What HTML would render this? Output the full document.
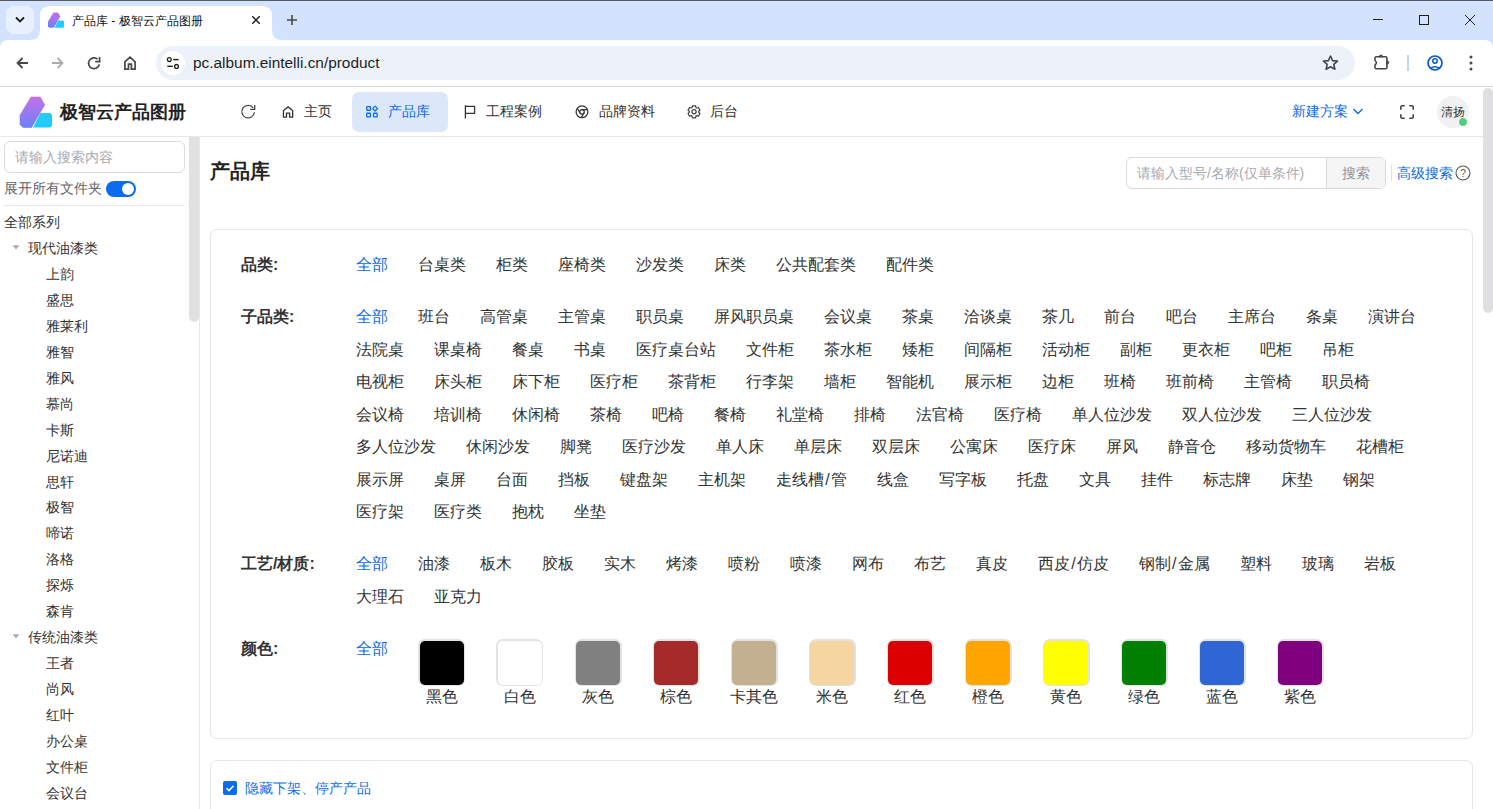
<!DOCTYPE html><html><head><meta charset="utf-8"><style>
*{box-sizing:border-box;margin:0;padding:0}
html,body{width:1493px;height:809px;overflow:hidden;background:#fff;font-family:"Liberation Sans",sans-serif;color:#333}
.a{position:absolute}
.t{position:absolute;white-space:nowrap;line-height:20px;height:20px}
svg{position:absolute;overflow:visible}
#tabstrip{left:0;top:0;width:1493px;height:48px;background:#d3e3fd}
#topline{left:0;top:0;width:1493px;height:1px;background:#575a62}
#toolbar{left:0;top:40px;width:1493px;height:46px;background:#fff;border-radius:8px 8px 0 0}
#tbline{left:0;top:86px;width:1493px;height:1px;background:#d5d7db}
#omni{left:156px;top:46px;width:1199px;height:34px;background:#edf2fa;border-radius:17px}
#header{left:0;top:87px;width:1483px;height:50px;background:#fff;border-bottom:1px solid #e8e8e8}
#sidebar{left:0;top:137px;width:200px;height:672px;border-right:1px solid #e8e8ea;background:#fff}
#pscroll{left:1483px;top:88px;width:10px;height:225px;background:#dfdfe1;border-radius:5px}
#sscroll{left:189px;top:137px;width:10px;height:185px;background:#e1e1e3;border-radius:0 0 5px 5px}
.nav{font-size:14px;color:#333}
.blue{color:#0d6bf0}
.tree{font-size:14px;color:#333}
.row{position:absolute;left:356px;display:flex;gap:30px;font-size:16px;line-height:20px;height:20px;white-space:nowrap;color:#333}
.lab{position:absolute;left:241px;font-size:16px;font-weight:bold;line-height:20px;color:#333;white-space:nowrap}
.card{position:absolute;left:210px;width:1263px;border:1px solid #e6e6e9;border-radius:7px;background:#fff}
.sw{position:absolute;top:639px;width:47px;height:47px;border:2px solid #e2e2e4;border-radius:7px}
.sw i{position:absolute;left:-0.5px;top:-0.5px;right:-0.5px;bottom:-0.5px;border-radius:5px}
.swl{position:absolute;top:687px;width:60px;text-align:center;font-size:16px;line-height:20px;color:#333}
</style></head><body>
<div class="a" id="tabstrip"></div><div class="a" id="topline"></div>
<div class="a" style="left:6px;top:6px;width:28px;height:28px;border-radius:8px;background:#e9f1fe"></div>
<svg style="left:0;top:0" width="40" height="40"><path d="M16 17.5L20 21.5L24 17.5" fill="none" stroke="#1f1f1f" stroke-width="1.8"/></svg>
<svg style="left:0;top:0" width="300" height="48"><path d="M30 40 Q40 40 40 30 V16 Q40 6 50 6 H262 Q272 6 272 16 V30 Q272 40 282 40 Z" fill="#fff"/></svg>
<svg style="left:46px;top:10.5px" width="20" height="19" viewBox="0 0 40 38">
<defs><linearGradient id="fg1" x1="0" y1="0" x2="0" y2="1"><stop offset="0" stop-color="#c66fe8"/><stop offset="0.5" stop-color="#9a79ee"/><stop offset="1" stop-color="#6c7ff5"/></linearGradient></defs>
<path d="M24.5 19H33A3 3 0 0 1 36 22V30.5A3 3 0 0 1 33 33.5H17Z" fill="#21cbfc"/>
<path d="M15 3H24.4L28.7 11L15.5 33.5H7L4 30.5V21Z" fill="url(#fg1)"/></svg>
<div class="t" style="left:72px;top:10.5px;font-size:12px;color:#111">产品库 - 极智云产品图册</div>
<svg style="left:0;top:0" width="300" height="40"><path d="M252.3 16.3L259.7 23.7M259.7 16.3L252.3 23.7" stroke="#1f1f1f" stroke-width="1.5"/><path d="M292 15V25M287 20H297" stroke="#474747" stroke-width="1.6"/></svg>
<svg style="left:1360px;top:0" width="133" height="40"><path d="M13 19.5H23" stroke="#1f1f1f" stroke-width="1"/><rect x="59.5" y="15.5" width="9" height="9" fill="none" stroke="#1f1f1f" stroke-width="1"/><path d="M105 15L115 25M115 15L105 25" stroke="#1f1f1f" stroke-width="1"/></svg>
<div class="a" id="toolbar"></div><div class="a" id="tbline"></div><div class="a" id="omni"></div>
<svg style="left:0;top:40px" width="200" height="46">
<path d="M28 23H17.5M22.5 18L17.5 23L22.5 28" fill="none" stroke="#474747" stroke-width="1.8"/>
<path d="M52 23H62.5M57.5 18L62.5 23L57.5 28" fill="none" stroke="#a9abae" stroke-width="1.8"/>
<path d="M99.3 24.3A5.4 5.4 0 1 1 97.6 19.2" fill="none" stroke="#474747" stroke-width="1.7"/><path d="M95.2 21.6H99.6V17" fill="none" stroke="#474747" stroke-width="1.7"/>
<path d="M124.9 29.1V21.8L130 17.2L135.1 21.8V29.1H131.4V24.1H128.5V29.1Z" fill="none" stroke="#474747" stroke-width="1.7" stroke-linejoin="miter"/>
<circle cx="173" cy="23" r="12" fill="#fff"/>
<circle cx="169.3" cy="19.6" r="1.9" fill="none" stroke="#1f1f1f" stroke-width="1.3"/><path d="M173.2 19.6H178.6" stroke="#1f1f1f" stroke-width="1.4"/>
<circle cx="176.5" cy="26.4" r="1.9" fill="none" stroke="#1f1f1f" stroke-width="1.3"/><path d="M167.3 26.3H172.8" stroke="#1f1f1f" stroke-width="1.4"/>
</svg>
<div class="t" style="left:193px;top:52px;font-size:15.4px;color:#1f1f1f;line-height:22px;height:22px">pc.album.eintelli.cn/product</div>
<svg style="left:1300px;top:40px" width="193" height="46">
<path d="M30.5 16L32.6 20.6L37.5 21.1L33.8 24.4L34.9 29.3L30.5 26.8L26.1 29.3L27.2 24.4L23.5 21.1L28.4 20.6Z" fill="none" stroke="#474747" stroke-width="1.6" stroke-linejoin="round"/>
<path d="M76.3 16.8H85.6Q86.9 16.8 86.9 18.1V27.4Q86.9 28.7 85.6 28.7H76.3Q75 28.7 75 27.4V25Q77.8 22.75 75 20.5V18.1Q75 16.8 76.3 16.8Z" fill="none" stroke="#474747" stroke-width="1.6" stroke-linejoin="round"/>
<path d="M79.2 16.8A1.8 1.8 0 0 1 82.8 16.8Z" fill="#474747" stroke="#474747" stroke-width="0.8"/><path d="M86.9 20.8A1.8 1.8 0 0 1 86.9 24.4Z" fill="#474747" stroke="#474747" stroke-width="0.8"/>
<path d="M108 15V31" stroke="#a8c7fa" stroke-width="1.5"/>
<circle cx="135" cy="23" r="7" fill="none" stroke="#0b57d0" stroke-width="1.7"/><circle cx="135" cy="21" r="2.2" fill="none" stroke="#0b57d0" stroke-width="1.5"/><path d="M130.5 28A6 4 0 0 1 139.5 28" fill="none" stroke="#0b57d0" stroke-width="1.5"/>
<circle cx="171" cy="17" r="1.5" fill="#474747"/><circle cx="171" cy="23" r="1.5" fill="#474747"/><circle cx="171" cy="29" r="1.5" fill="#474747"/>
</svg>
<div class="a" id="header"></div>
<svg style="left:16px;top:94px" width="40" height="38" viewBox="0 0 40 38">
<defs><linearGradient id="lg1" x1="0" y1="0" x2="0" y2="1"><stop offset="0" stop-color="#c66fe8"/><stop offset="0.5" stop-color="#9a79ee"/><stop offset="1" stop-color="#6c7ff5"/></linearGradient></defs>
<path d="M24.5 19H33A3 3 0 0 1 36 22V30.5A3 3 0 0 1 33 33.5H17Z" fill="#21cbfc"/>
<path d="M15 3H24.4L28.7 11L15.5 33.5H7L4 30.5V21Z" fill="url(#lg1)" stroke="url(#lg1)" stroke-width="0.6" stroke-linejoin="round"/>
</svg>
<div class="t" style="left:60px;top:102px;font-size:18px;font-weight:bold;color:#222">极智云产品图册</div>
<svg style="left:240px;top:103px" width="16" height="16"><path d="M14.4 9.2A6.3 6.3 0 1 1 13.2 4.9" fill="none" stroke="#444" stroke-width="1.3"/><path d="M10.2 6.4H14.7V2" fill="none" stroke="#444" stroke-width="1.3"/></svg>
<div class="a" style="left:352px;top:92px;width:96px;height:40px;border-radius:7px;background:#dce8fa"></div>
<svg style="left:281px;top:104px" width="16" height="16"><path d="M2.45 13.05V6.5L7.05 2.9L11.65 6.5V13.05H8.6V9.2H5.5V13.05Z" fill="none" stroke="#333" stroke-width="1.3" stroke-linejoin="miter"/></svg>
<div class="t nav" style="left:304px;top:101px">主页</div>
<svg style="left:365px;top:104px" width="16" height="16"><g fill="none" stroke="#0d6bf0" stroke-width="1.3"><rect x="1.75" y="2.65" width="3.7" height="3.6" rx="0.4"/><rect x="1.75" y="9.25" width="3.7" height="3.7" rx="0.4"/><rect x="8.55" y="9.25" width="3.6" height="3.7" rx="0.4"/><path d="M10.1 2.15L12.55 4.6L10.1 7.05L7.65 4.6Z" stroke-linejoin="round"/></g></svg>
<div class="t nav blue" style="left:388px;top:101px">产品库</div>
<svg style="left:463px;top:104px" width="16" height="16"><path d="M2.4 14.6V1.2M2.4 2.4H11.6V9.3H2.4" fill="none" stroke="#333" stroke-width="1.3" stroke-linejoin="round"/></svg>
<div class="t nav" style="left:486px;top:101px">工程案例</div>
<svg style="left:574px;top:104px" width="16" height="16"><g fill="none" stroke="#333" stroke-width="1.25"><circle cx="8" cy="7.8" r="5.9"/><circle cx="8" cy="7.8" r="2.3"/><path d="M8.00 5.50L13.43 5.50M9.99 8.95L7.28 13.66M6.01 8.95L3.29 4.24"/></g></svg>
<div class="t nav" style="left:599px;top:101px">品牌资料</div>
<svg style="left:686px;top:104px" width="16" height="16"><g fill="none" stroke="#444" stroke-width="1.25" stroke-linejoin="round"><path d="M5.98 3.67L6.50 1.78L9.50 1.78L10.02 3.67L10.57 3.99L12.46 3.49L13.96 6.09L12.59 7.48L12.59 8.12L13.96 9.51L12.46 12.11L10.57 11.61L10.02 11.93L9.50 13.82L6.50 13.82L5.98 11.93L5.43 11.61L3.54 12.11L2.04 9.51L3.41 8.12L3.41 7.48L2.04 6.09L3.54 3.49L5.43 3.99Z"/><circle cx="8" cy="7.8" r="2.1"/></g></svg>
<div class="t nav" style="left:710px;top:101px">后台</div>
<div class="t nav blue" style="left:1292px;top:101px">新建方案</div>
<svg style="left:1352px;top:105px" width="12" height="12"><path d="M1.5 4L6 8.5L10.5 4" fill="none" stroke="#0d6bf0" stroke-width="1.4"/></svg>
<svg style="left:1399px;top:104px" width="16" height="16"><g fill="none" stroke="#444" stroke-width="1.6" stroke-linecap="round"><path d="M1.8 5.2V3.3Q1.8 1.8 3.3 1.8H5.2M10.8 1.8H12.7Q14.2 1.8 14.2 3.3V5.2M14.2 10.8V12.7Q14.2 14.2 12.7 14.2H10.8M5.2 14.2H3.3Q1.8 14.2 1.8 12.7V10.8"/></g></svg>
<div class="a" style="left:1437px;top:96px;width:32px;height:32px;border-radius:16px;background:#f1f1f1"></div>
<div class="t" style="left:1441px;top:102px;font-size:12px;color:#333">清扬</div>
<div class="a" style="left:1458px;top:117px;width:10px;height:10px;border-radius:5px;background:#4fcd7f;border:1px solid #fff"></div>
<div class="a" id="pscroll"></div>
<div class="a" id="sidebar"></div>
<div class="a" style="left:4px;top:141px;width:181px;height:32px;border:1px solid #dcdcdc;border-radius:6px"></div>
<div class="t" style="left:15px;top:147px;font-size:14px;color:#a8abb2">请输入搜索内容</div>
<div class="t" style="left:4px;top:178px;font-size:14px;color:#606266">展开所有文件夹</div>
<div class="a" style="left:106px;top:181px;width:30px;height:16px;border-radius:8px;background:#0b6cf0"></div>
<div class="a" style="left:122px;top:183px;width:12px;height:12px;border-radius:6px;background:#fff"></div>
<div class="a" style="left:4px;top:205px;width:181px;height:1px;background:#e4e7ed"></div>
<div class="t tree" style="left:4px;top:212.0px">全部系列</div>
<div class="t tree" style="left:28px;top:237.95px">现代油漆类</div>
<svg style="left:11px;top:242.95px" width="10" height="8"><path d="M1.5 2.2H8.5L5 6.6Z" fill="#a8abb2"/></svg>
<div class="t tree" style="left:46px;top:263.9px">上韵</div>
<div class="t tree" style="left:46px;top:289.85px">盛思</div>
<div class="t tree" style="left:46px;top:315.8px">雅莱利</div>
<div class="t tree" style="left:46px;top:341.75px">雅智</div>
<div class="t tree" style="left:46px;top:367.7px">雅风</div>
<div class="t tree" style="left:46px;top:393.65px">慕尚</div>
<div class="t tree" style="left:46px;top:419.6px">卡斯</div>
<div class="t tree" style="left:46px;top:445.55px">尼诺迪</div>
<div class="t tree" style="left:46px;top:471.5px">思轩</div>
<div class="t tree" style="left:46px;top:497.45px">极智</div>
<div class="t tree" style="left:46px;top:523.4px">啼诺</div>
<div class="t tree" style="left:46px;top:549.35px">洛格</div>
<div class="t tree" style="left:46px;top:575.3px">探烁</div>
<div class="t tree" style="left:46px;top:601.25px">森肯</div>
<div class="t tree" style="left:28px;top:627.2px">传统油漆类</div>
<svg style="left:11px;top:632.2px" width="10" height="8"><path d="M1.5 2.2H8.5L5 6.6Z" fill="#a8abb2"/></svg>
<div class="t tree" style="left:46px;top:653.15px">王者</div>
<div class="t tree" style="left:46px;top:679.1px">尚风</div>
<div class="t tree" style="left:46px;top:705.05px">红叶</div>
<div class="t tree" style="left:46px;top:731.0px">办公桌</div>
<div class="t tree" style="left:46px;top:756.95px">文件柜</div>
<div class="t tree" style="left:46px;top:782.9px">会议台</div>
<div class="a" id="sscroll"></div>
<div class="t" style="left:210px;top:160px;font-size:20px;font-weight:bold;color:#222;line-height:22px;height:22px">产品库</div>
<div class="a" style="left:1126px;top:157px;width:260px;height:32px;border:1px solid #dcdcdc;border-radius:6px;overflow:hidden"><div class="a" style="left:198.5px;top:0;width:61px;height:30px;background:#f5f5f5;border-left:1px solid #dcdcdc"></div></div>
<div class="t" style="left:1137px;top:163px;font-size:14px;color:#a8abb2">请输入型号/名称(仅单条件)</div>
<div class="t" style="left:1342px;top:163px;font-size:14px;color:#909399">搜索</div>
<div class="a" style="left:1391px;top:165px;width:1px;height:16px;background:#dcdfe6"></div>
<div class="t blue" style="left:1397px;top:163px;font-size:14px">高级搜索</div>
<svg style="left:1455px;top:165px" width="16" height="16"><circle cx="8" cy="8" r="7" fill="none" stroke="#555" stroke-width="1.1"/><text x="8" y="12" font-size="10" text-anchor="middle" fill="#555" font-family="Liberation Sans">?</text></svg>
<div class="card" style="top:229px;height:510px"></div>
<div class="card" style="top:760px;height:60px"></div>
<div class="lab" style="top:255px">品类:</div>
<div class="row" style="top:255px"><span class="blue">全部</span><span>台桌类</span><span>柜类</span><span>座椅类</span><span>沙发类</span><span>床类</span><span>公共配套类</span><span>配件类</span></div>
<div class="lab" style="top:307px">子品类:</div>
<div class="row" style="top:307.0px"><span class="blue">全部</span><span>班台</span><span>高管桌</span><span>主管桌</span><span>职员桌</span><span>屏风职员桌</span><span>会议桌</span><span>茶桌</span><span>洽谈桌</span><span>茶几</span><span>前台</span><span>吧台</span><span>主席台</span><span>条桌</span><span>演讲台</span></div>
<div class="row" style="top:339.5px"><span>法院桌</span><span>课桌椅</span><span>餐桌</span><span>书桌</span><span>医疗桌台站</span><span>文件柜</span><span>茶水柜</span><span>矮柜</span><span>间隔柜</span><span>活动柜</span><span>副柜</span><span>更衣柜</span><span>吧柜</span><span>吊柜</span></div>
<div class="row" style="top:372.0px"><span>电视柜</span><span>床头柜</span><span>床下柜</span><span>医疗柜</span><span>茶背柜</span><span>行李架</span><span>墙柜</span><span>智能机</span><span>展示柜</span><span>边柜</span><span>班椅</span><span>班前椅</span><span>主管椅</span><span>职员椅</span></div>
<div class="row" style="top:404.5px"><span>会议椅</span><span>培训椅</span><span>休闲椅</span><span>茶椅</span><span>吧椅</span><span>餐椅</span><span>礼堂椅</span><span>排椅</span><span>法官椅</span><span>医疗椅</span><span>单人位沙发</span><span>双人位沙发</span><span>三人位沙发</span></div>
<div class="row" style="top:437.0px"><span>多人位沙发</span><span>休闲沙发</span><span>脚凳</span><span>医疗沙发</span><span>单人床</span><span>单层床</span><span>双层床</span><span>公寓床</span><span>医疗床</span><span>屏风</span><span>静音仓</span><span>移动货物车</span><span>花槽柜</span></div>
<div class="row" style="top:469.5px"><span>展示屏</span><span>桌屏</span><span>台面</span><span>挡板</span><span>键盘架</span><span>主机架</span><span>走线槽<b style="display:inline-block;width:6.9px;text-align:center;font-weight:normal">/</b>管</span><span>线盒</span><span>写字板</span><span>托盘</span><span>文具</span><span>挂件</span><span>标志牌</span><span>床垫</span><span>钢架</span></div>
<div class="row" style="top:502.0px"><span>医疗架</span><span>医疗类</span><span>抱枕</span><span>坐垫</span></div>
<div class="lab" style="top:554px">工艺/材质:</div>
<div class="row" style="top:554px"><span class="blue">全部</span><span>油漆</span><span>板木</span><span>胶板</span><span>实木</span><span>烤漆</span><span>喷粉</span><span>喷漆</span><span>网布</span><span>布艺</span><span>真皮</span><span>西皮<b style="display:inline-block;width:6.9px;text-align:center;font-weight:normal">/</b>仿皮</span><span>钢制<b style="display:inline-block;width:6.9px;text-align:center;font-weight:normal">/</b>金属</span><span>塑料</span><span>玻璃</span><span>岩板</span></div>
<div class="row" style="top:586.5px"><span>大理石</span><span>亚克力</span></div>
<div class="lab" style="top:639px">颜色:</div>
<div class="t blue" style="left:356px;top:639px;font-size:16px">全部</div>
<div class="sw" style="left:418.4px"><i style="background:#000"></i></div>
<div class="swl" style="left:411.9px">黑色</div>
<div class="sw" style="left:496.4px"><i style="background:#fff"></i></div>
<div class="swl" style="left:489.9px">白色</div>
<div class="sw" style="left:574.5px"><i style="background:#808080"></i></div>
<div class="swl" style="left:568.0px">灰色</div>
<div class="sw" style="left:652.5px"><i style="background:#a52a2a"></i></div>
<div class="swl" style="left:646.0px">棕色</div>
<div class="sw" style="left:730.5px"><i style="background:#c3b091"></i></div>
<div class="swl" style="left:724.0px">卡其色</div>
<div class="sw" style="left:808.5px"><i style="background:#f5d6a0"></i></div>
<div class="swl" style="left:802.0px">米色</div>
<div class="sw" style="left:886.6px"><i style="background:#dd0000"></i></div>
<div class="swl" style="left:880.1px">红色</div>
<div class="sw" style="left:964.6px"><i style="background:#ffa500"></i></div>
<div class="swl" style="left:958.1px">橙色</div>
<div class="sw" style="left:1042.6px"><i style="background:#ffff00"></i></div>
<div class="swl" style="left:1036.1px">黄色</div>
<div class="sw" style="left:1120.7px"><i style="background:#008000"></i></div>
<div class="swl" style="left:1114.2px">绿色</div>
<div class="sw" style="left:1198.7px"><i style="background:#2f66d4"></i></div>
<div class="swl" style="left:1192.2px">蓝色</div>
<div class="sw" style="left:1276.7px"><i style="background:#800080"></i></div>
<div class="swl" style="left:1270.2px">紫色</div>
<div class="a" style="left:223px;top:781px;width:14px;height:14px;border-radius:2px;background:#0d6bf0"></div>
<svg style="left:223px;top:781px" width="14" height="14"><path d="M3.5 7.2L6 9.6L10.5 4.8" fill="none" stroke="#fff" stroke-width="1.5"/></svg>
<div class="t blue" style="left:245px;top:778px;font-size:14px">隐藏下架、停产产品</div>
</body></html>
